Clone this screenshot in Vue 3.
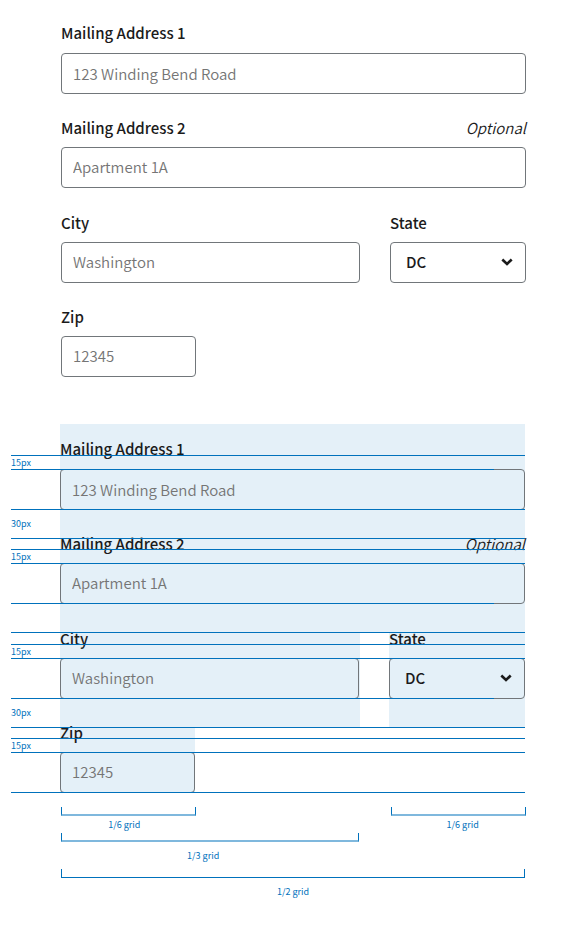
<script setup>
const forms = [
  { id: 'plain', annotated: false },
  { id: 'spec', annotated: true }
]

const fields = [
  { key: 'address1', label: 'Mailing Address 1', placeholder: '123 Winding Bend Road' },
  { key: 'address2', label: 'Mailing Address 2', placeholder: 'Apartment 1A', optional: true },
  { key: 'city', label: 'City', placeholder: 'Washington' },
  { key: 'state', label: 'State', options: ['DC', 'MD', 'VA'] },
  { key: 'zip', label: 'Zip', placeholder: '12345' }
]

// Distances between consecutive guide lines, top to bottom.
const bands = [
  { height: 14, text: '15px' },
  { height: 40, short: true },
  { height: 29, text: '30px' },
  { height: 11 },
  { height: 14, text: '15px' },
  { height: 40 },
  { height: 29, short: true },
  { height: 12 },
  { height: 14, text: '15px' },
  { height: 40 },
  { height: 29, text: '30px', short: true },
  { height: 11 },
  { height: 14, text: '15px' },
  { height: 40 },
  { height: 1 }
]

const measures = [
  { key: 'sixth-left', text: '1/6 grid' },
  { key: 'sixth-right', text: '1/6 grid' },
  { key: 'third', text: '1/3 grid' },
  { key: 'half', text: '1/2 grid' }
]
</script>

<template>
  <main class="page">
    <section v-for="form in forms" :key="form.id" class="sheet" :class="{ annotated: form.annotated }">
      <form class="address" @submit.prevent>
        <div v-for="field in fields" :key="field.key" class="field" :class="field.key">
          <div class="caption">
            <label :for="`${form.id}-${field.key}`">{{ field.label }}</label>
            <em v-if="field.optional">Optional</em>
          </div>
          <div v-if="field.options" class="picker">
            <select :id="`${form.id}-${field.key}`" class="control">
              <option v-for="option in field.options" :key="option">{{ option }}</option>
            </select>
            <svg class="chevron" viewBox="0 0 12 8" aria-hidden="true">
              <path d="M1.3 1.5 6 6l4.7-4.5" />
            </svg>
          </div>
          <input
            v-else
            :id="`${form.id}-${field.key}`"
            class="control"
            type="text"
            :placeholder="field.placeholder"
          />
        </div>
      </form>
      <div v-if="form.annotated" class="guides">
        <div
          v-for="(band, index) in bands"
          :key="index"
          class="band"
          :class="{ short: band.short }"
          :style="{ height: `${band.height}px` }"
        >
          {{ band.text }}
        </div>
      </div>
    </section>

    <section class="measures">
      <div v-for="measure in measures" :key="measure.key" class="measure" :class="measure.key">
        <div class="bracket"></div>
        <span>{{ measure.text }}</span>
      </div>
    </section>
  </main>
</template>

<style>
body {
  background: #fff;
}
</style>

<style scoped>
.page {
  padding-top: 28px;
  padding-bottom: 28px;
  color: #1b1b1b;
  font-family: "Noto Sans CJK JP", "Noto Sans", sans-serif;
  font-size: 15px;
}

.sheet {
  position: relative;
  padding: 0 52px 0 61px;
}

.sheet.annotated {
  margin-top: 19px;
  padding: 0 53px 0 60px;
}

.address {
  display: grid;
  grid-template-columns: repeat(3, 1fr);
  column-gap: 30px;
}

.field {
  padding-top: 1px;
  padding-bottom: 28px;
}

.annotated .field {
  background: #e4f0f8;
}

.address1,
.address2 {
  grid-column: 1 / -1;
}

.address1 {
  padding-top: 0;
}

.annotated .address1 {
  padding-top: 20px;
}

.city {
  grid-column: span 2;
}

.city,
.state {
  padding-top: 2px;
}

.state {
  margin-left: -1px;
}

.annotated .zip {
  padding-bottom: 0;
}

.caption {
  display: flex;
  justify-content: space-between;
  margin-bottom: 14px;
  line-height: 10px;
}

.address1 .caption {
  margin-bottom: 15px;
}

label {
  font-weight: 500;
}

em {
  font-weight: 350;
}

.control {
  display: block;
  box-sizing: border-box;
  width: 100%;
  height: 41px;
  margin: 0;
  padding: 0 11px 2px;
  border: 1px solid #71767a;
  border-radius: 4px;
  background: transparent;
  color: #1b1b1b;
  font: inherit;
  font-weight: 350;
  appearance: none;
}

.address1 .control {
  padding-bottom: 0;
}

.city .control {
  width: calc(100% - 1px);
}

.control::placeholder {
  color: #757575;
  opacity: 1;
}

.picker {
  position: relative;
}

select.control {
  padding: 0 32px 2px 15px;
  font-weight: 500;
}

.chevron {
  position: absolute;
  top: 16px;
  right: 13px;
  width: 12px;
  height: 8px;
  fill: none;
  stroke: #1b1b1b;
  stroke-width: 2.6;
  pointer-events: none;
}

.guides {
  position: absolute;
  top: 31px;
  right: 53px;
  left: 11px;
  color: #0071bc;
  font-size: 9px;
  line-height: 14px;
  pointer-events: none;
}

.band {
  display: flex;
  align-items: center;
  box-sizing: border-box;
  border-top: 1px solid #0071bc;
}

.band.short {
  margin-right: 31px;
}

.measures {
  display: grid;
  grid-template-columns: repeat(3, 1fr);
  column-gap: 30px;
  padding: 14px 53px 0 61px;
  color: #0071bc;
  font-size: 9px;
  line-height: 14px;
  text-align: center;
}

.bracket {
  box-sizing: border-box;
  height: 9px;
  border: solid #0071bc;
  border-width: 0 1px 1px;
}

.measure span {
  display: block;
}

.sixth-left {
  grid-column: 1;
}

.sixth-right {
  grid-column: 3;
  margin: 0 -1px 0 1px;
}

.sixth-left .bracket,
.sixth-right .bracket,
.third .bracket {
  border-bottom: 2px solid #7fb8dd;
}

.sixth-left span {
  padding: 2px 8px 0 0;
}

.sixth-right span {
  padding: 2px 0 0 8px;
}

.third {
  grid-column: 1 / 3;
  margin: 1px 1px 0 0;
}

.third span {
  padding: 7px 14px 0 0;
}

.half {
  grid-column: 1 / -1;
  padding-top: 6px;
}

.half span {
  padding-top: 7px;
}
</style>
